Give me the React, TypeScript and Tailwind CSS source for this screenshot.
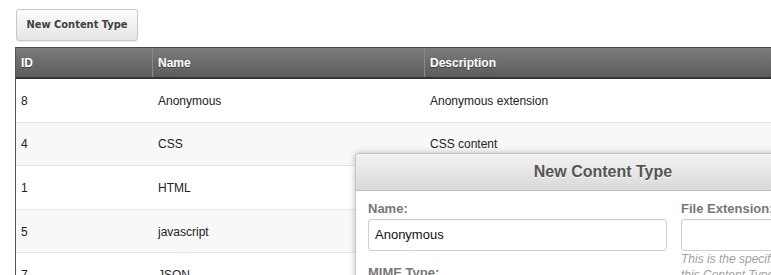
import React from "react";

const rows = [
  { id: "8", name: "Anonymous", desc: "Anonymous extension" },
  { id: "4", name: "CSS", desc: "CSS content" },
  { id: "1", name: "HTML", desc: "" },
  { id: "5", name: "javascript", desc: "" },
  { id: "7", name: "JSON", desc: "" },
];

export default function App() {
  return (
    <div className="relative w-[771px] h-[275px] overflow-hidden bg-white font-['Liberation_Sans',Arial,sans-serif]">
      <div className="pt-[9px] pl-[16px]">
        <button className="h-[32px] w-[122px] rounded-[3px] border border-[#c8c8c8] bg-gradient-to-b from-[#fdfdfd] to-[#e4e4e4] text-[11px] font-bold text-[#404040] font-['DejaVu_Sans_Condensed','DejaVu_Sans',Tahoma,sans-serif] shadow-[0_1px_1px_rgba(0,0,0,0.08)]">
          New Content Type
        </button>
      </div>
      <div className="mt-[6px] ml-[15px] w-[800px] border-l border-[#555]">
        <div className="grid grid-cols-[137px_272px_1fr] h-[32px] bg-gradient-to-b from-[#7b7b7b] to-[#5c5c5c] border-t border-[#4a4a4a] border-b-2 border-b-[#333] text-white text-[12px] font-bold [text-shadow:0_1px_0_rgba(0,0,0,0.4)]">
          <div className="flex items-center pl-[5px] pt-[1px] border-r border-[#8a8a8a]">ID</div>
          <div className="flex items-center pl-[5px] pt-[1px] border-r border-[#8a8a8a]">Name</div>
          <div className="flex items-center pl-[5px] pt-[1px]">Description</div>
        </div>
        {rows.map((r, i) => (
          <div
            key={r.id}
            className={`grid grid-cols-[137px_272px_1fr] h-[43.6px] border-b border-[#e4e4e4] text-[12px] text-[#222] ${i % 2 === 1 ? "bg-[#f8f8f8]" : "bg-white"}`}
          >
            <div className="flex items-center pl-[5px] pt-[1px]">{r.id}</div>
            <div className="flex items-center pl-[5px] pt-[1px]">{r.name}</div>
            <div className="flex items-center pl-[5px] pt-[1px]">{r.desc}</div>
          </div>
        ))}
      </div>

      <div className="absolute left-[355px] top-[153px] w-[496px] h-[200px] bg-white border border-[#c4c4c4] rounded-t-[4px] shadow-[0_0_6px_rgba(0,0,0,0.25)]">
        <div className="h-[37px] flex items-center justify-center bg-gradient-to-b from-[#f3f3f3] to-[#d9d9d9] border-b border-[#bdbdbd] rounded-t-[4px] text-[16px] font-bold text-[#555] [text-shadow:0_1px_0_#fff]">
          New Content Type
        </div>
        <div className="flex gap-[14px] pl-[12px] pt-[10px]">
          <div className="w-[299px] flex flex-col">
            <label className="text-[13px] font-bold text-[#777] leading-[16px]">Name:</label>
            <div className="mt-[2px] h-[32px] rounded-[3px] border border-[#cfcfcf] bg-white flex items-center pl-[6px] text-[13px] text-[#111] shadow-[inset_0_1px_1px_rgba(0,0,0,0.05)]">
              Anonymous
            </div>
            <label className="mt-[14px] text-[13px] font-bold text-[#777] leading-[16px]">MIME Type:</label>
          </div>
          <div className="w-[160px] flex flex-col">
            <label className="text-[13px] font-bold text-[#777] leading-[16px] whitespace-nowrap">File Extension:</label>
            <div className="mt-[2px] h-[32px] rounded-[3px] border border-[#cfcfcf] bg-white shadow-[inset_0_1px_1px_rgba(0,0,0,0.05)]" />
            <p className="mt-0 text-[12px] italic text-[#a0a0a0] leading-[16px] whitespace-nowrap">
              This is the specific file extension for
              <br />
              this Content Type.
            </p>
          </div>
        </div>
      </div>
    </div>
  );
}
